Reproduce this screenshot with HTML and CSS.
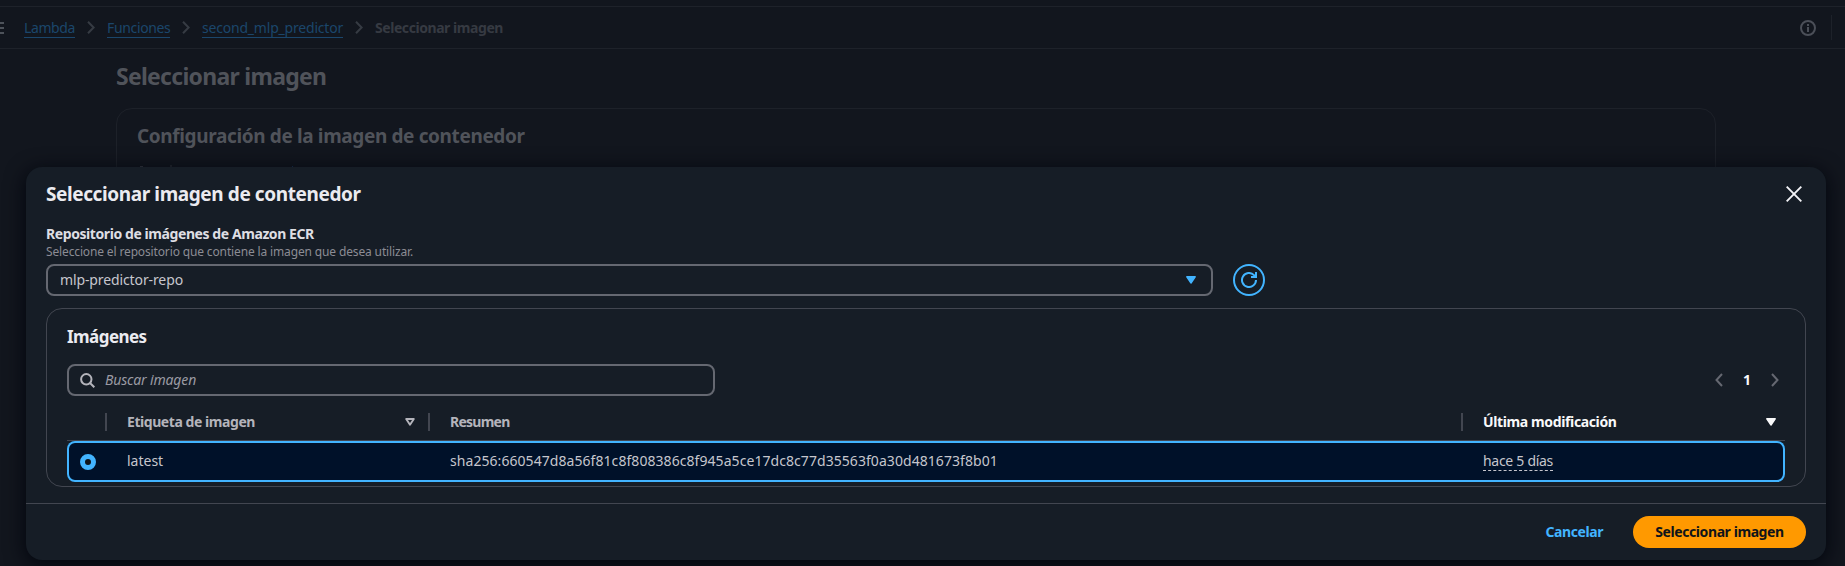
FILE: index.html
```html
<!DOCTYPE html>
<html lang="es">
<head>
<meta charset="utf-8">
<title>Seleccionar imagen</title>
<link rel="stylesheet" href="styles.css">
</head>
<body>
<div class="topbar">
  <svg class="menu" width="4" height="12" viewBox="0 0 4 12"><path d="M0 1h4M0 6h4M0 11h4" stroke="#4d525a" stroke-width="2"/></svg>
  <nav class="crumbs">
    <a class="c-lambda">Lambda</a>
    <svg class="chev" width="8" height="13" viewBox="0 0 8 13"><path d="M1 .8l5.6 5.7L1 12.2"/></svg>
    <a class="c-func">Funciones</a>
    <svg class="chev" width="8" height="13" viewBox="0 0 8 13"><path d="M1 .8l5.6 5.7L1 12.2"/></svg>
    <a class="c-name">second_mlp_predictor</a>
    <svg class="chev" width="8" height="13" viewBox="0 0 8 13"><path d="M1 .8l5.6 5.7L1 12.2"/></svg>
    <span class="current">Seleccionar imagen</span>
  </nav>
  <svg class="info" width="16" height="16" viewBox="0 0 16 16"><circle cx="8" cy="8" r="7" fill="none" stroke="#4b4f58" stroke-width="2"/><path d="M8 7v5M8 4v2" stroke="#4b4f58" stroke-width="2"/></svg>
  <i class="bar-sep"></i>
</div>
<main class="page">
  <h1>Seleccionar imagen</h1>
  <section class="panel">
    <h2>Configuración de la imagen de contenedor</h2>
    <svg class="peek" width="160" height="2" viewBox="0 0 160 2"><path d="M2 1.500h3M32 1h2" stroke="#363a42" stroke-width="1"/><path d="M154 1.500h1" stroke="#1b3455"/></svg>
  </section>
</main>

<div class="modal">
  <header class="modal-head">
    <h2>Seleccionar imagen de contenedor</h2>
    <svg class="close" width="16" height="16" viewBox="0 0 16 16"><path d="M.7.7l14.6 14.6M15.3.7L.7 15.3" stroke="#f3f3f7" stroke-width="1.9"/></svg>
  </header>
  <div class="modal-body">
    <div class="label">Repositorio de imágenes de Amazon ECR</div>
    <div class="hint">Seleccione el repositorio que contiene la imagen que desea utilizar.</div>
    <div class="repo-row">
      <div class="select"><span>mlp-predictor-repo</span>
        <svg width="10" height="8" viewBox="0 0 10 8"><path d="M.8.8h8.400L5 7z" fill="#42b4ff" stroke="#42b4ff" stroke-width="1.4" stroke-linejoin="round"/></svg>
      </div>
      <div class="refresh">
        <svg width="16" height="16" viewBox="0 0 16 16" fill="none" stroke="#42b4ff" stroke-width="2"><path d="M15 8a7 7 0 1 1-2-4.900L14.800 5"/><path d="M15 0v5h-5"/></svg>
      </div>
    </div>
    <section class="images">
      <h3>Imágenes</h3>
      <div class="tools">
        <div class="search">
          <svg width="15" height="15" viewBox="0 0 15 15" fill="none" stroke="#b4b4bb" stroke-width="2"><circle cx="6.300" cy="6.300" r="5.200"/><path d="M10 10l4.300 4.300"/></svg>
          <span>Buscar imagen</span>
        </div>
        <div class="pager">
          <svg width="8" height="14" viewBox="0 0 8 14"><path d="M7 1L1.500 7 7 13"/></svg>
          <b>1</b>
          <svg width="8" height="14" viewBox="0 0 8 14"><path d="M1 1l5.500 6L1 13"/></svg>
        </div>
      </div>
      <div class="cols thead">
        <div class="th"></div>
        <div class="th"><span class="t-tag">Etiqueta de imagen</span>
          <svg width="10" height="8" viewBox="0 0 10 8"><path d="M1.200 1h7.600L5 6.800z" fill="none" stroke="#b4b4bb" stroke-width="1.900" stroke-linejoin="round"/></svg></div>
        <div class="th"><span class="t-sum">Resumen</span></div>
        <div class="th sorted"><span class="t-mod">Última modificación</span>
          <svg width="10" height="8" viewBox="0 0 10 8"><path d="M.8.8h8.400L5 7z" fill="#f9f9fa" stroke="#f9f9fa" stroke-width="1.400" stroke-linejoin="round"/></svg></div>
      </div>
      <div class="cols row">
        <div class="pick"><i class="radio"></i></div>
        <div class="td">latest</div>
        <div class="td sha">sha256:660547d8a56f81c8f808386c8f945a5ce17dc8c77d35563f0a30d481673f8b01</div>
        <div class="td"><span class="ago">hace 5 días</span></div>
      </div>
    </section>
  </div>
  <footer class="modal-foot">
    <button class="cancel">Cancelar</button>
    <button class="primary">Seleccionar imagen</button>
  </footer>
</div>
</body>
</html>
```
FILE: styles.css
```css
* { box-sizing: border-box; }
html, body { height: 100%; overflow: hidden; }
body {
  margin: 0;
  padding-top: 6px;
  background: #12161e;
  color: #c6c6cd;
  font: 14px/20px "Noto Sans", "Open Sans", sans-serif;
}
h1, h2, h3 { margin: 0; font-weight: 700; white-space: nowrap; }
svg { display: block; flex: none; }

.topbar {
  display: flex;
  align-items: center;
  height: 43px;
  border-top: 1px solid #1e222a;
  border-bottom: 1px solid #1e222a;
}
.menu { margin-right: 20px; }
.crumbs { display: flex; align-items: center; flex: 1; white-space: nowrap; }
.crumbs a { color: #1b466b; line-height: 19px; border-bottom: 1px solid #1b466b; }
.c-lambda { width: 51px; letter-spacing: -.4px; }
.c-func { width: 63px; letter-spacing: -.35px; }
.c-name { width: 141px; letter-spacing: -.2px; }
.chev { margin: 0 12px; fill: none; stroke: #363b43; stroke-width: 2; }
.current { color: #363a42; font-weight: 700; letter-spacing: -.44px; }
.bar-sep { width: 1px; height: 25px; margin: 0 13px 0 15px; background: #1e222a; }

.page { padding: 12px 129px 0 116px; color: #50535a; }
.page h1 { margin-bottom: 17px; font-size: 23px; line-height: 30px; letter-spacing: -.72px; }
.panel { height: 420px; padding: 15px 20px; border: 1px solid #1d2129; border-radius: 16px; }
.panel h2 { font-size: 19px; line-height: 24px; letter-spacing: -.37px; }
.peek { margin: 17px 0 0 1px; }

.modal {
  position: absolute;
  top: 167px;
  left: 26px;
  width: 1800px;
  height: 393px;
  background: #161d26;
  border-radius: 16px;
  box-shadow: 0 4px 20px 1px rgba(0, 4, 12, .9);
}
.modal-head { display: flex; justify-content: space-between; padding: 15px 24px 0 20px; color: #ebebf0; }
.modal-head h2 { font-size: 19px; line-height: 24px; letter-spacing: -.4px; }
.close { margin-top: 4px; }
.modal-body { padding: 18px 20px 16px; }
.label { color: #dedee3; font-weight: 700; letter-spacing: -.42px; }
.hint { color: #8c8c94; font-size: 12px; line-height: 16px; letter-spacing: -.14px; }

.repo-row { display: flex; gap: 20px; margin: 4px 0 12px; }
.select {
  display: flex;
  align-items: center;
  justify-content: space-between;
  width: 1167px;
  height: 32px;
  padding: 0 15px 0 12px;
  border: 2px solid #656871;
  border-radius: 8px;
  letter-spacing: -.115px;
}
.refresh {
  display: grid;
  place-items: center;
  width: 32px;
  height: 32px;
  border: 2px solid #42b4ff;
  border-radius: 50%;
}

.images { height: 179px; padding: 17px 20px 0; border: 1px solid #424650; border-radius: 16px; }
.images h3 { color: #ebebf0; font-size: 17px; line-height: 22px; letter-spacing: -.55px; }
.tools { display: flex; align-items: center; justify-content: space-between; margin-top: 16px; }
.search {
  display: flex;
  align-items: center;
  gap: 10px;
  width: 648px;
  height: 32px;
  padding: 0 11px;
  border: 2px solid #656871;
  border-radius: 8px;
  color: #9a9aa3;
  font-style: italic;
  letter-spacing: -.15px;
}
.pager { display: flex; align-items: center; padding-right: 6px; }
.pager svg { fill: none; stroke: #656871; stroke-width: 2; }
.pager b { width: 48px; color: #f9f9fa; text-align: center; }

.cols { display: grid; grid-template-columns: 40px 323px 1033px 322px; align-items: center; }
.thead { height: 37px; margin-top: 8px; border-bottom: 1px solid #424650; }
.th {
  display: flex;
  align-items: center;
  justify-content: space-between;
  height: 18px;
  padding: 0 13px 0 20px;
  border-right: 2px solid #424650;
  color: #b4b4bb;
  font-weight: 700;
  white-space: nowrap;
}
.th.sorted { padding-right: 9px; border-right: 0; color: #f9f9fa; }
.t-tag { letter-spacing: -.44px; }
.t-sum { letter-spacing: -.75px; }
.t-mod { letter-spacing: -.373px; }
.row { height: 41px; background: #001129; border-radius: 8px; box-shadow: inset 0 0 0 2px #42b4ff; }
.pick { padding-left: 13px; }
.radio { display: block; width: 16px; height: 16px; border: 5px solid #42b4ff; border-radius: 50%; background: #0f141a; }
.td { padding: 0 0 1px 20px; white-space: nowrap; }
.sha { letter-spacing: .06px; }
.ago { border-bottom: 1px dashed #c6c6cd; letter-spacing: -.29px; }

.modal-foot {
  display: flex;
  justify-content: flex-end;
  gap: 30px;
  padding: 12px 20px;
  border-top: 1px solid #424650;
}
.modal-foot button { height: 32px; padding: 0; border: 0; font: 700 14px/20px "Noto Sans", "Open Sans", sans-serif; }
.cancel { background: none; color: #42b4ff; letter-spacing: -.42px; }
.primary { width: 173px; border-radius: 16px; background: #ff9900; color: #0f141a; letter-spacing: -.42px; }
```
